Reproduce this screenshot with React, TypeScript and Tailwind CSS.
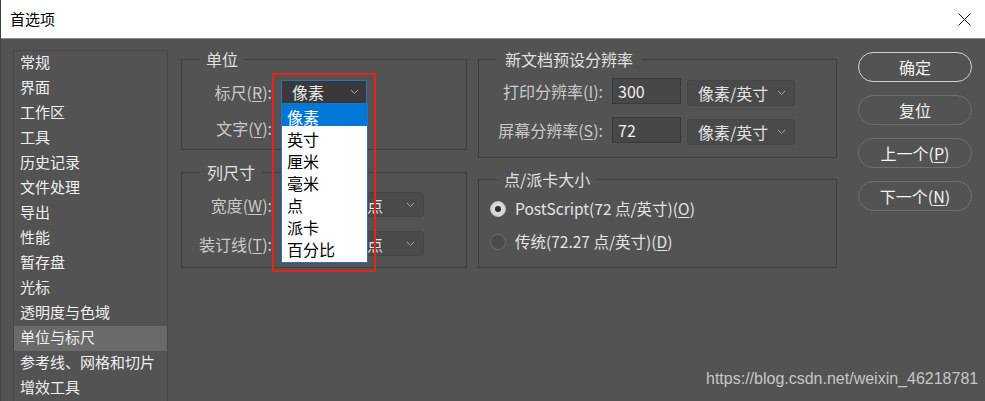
const navItems = [
  "常规",
  "界面",
  "工作区",
  "工具",
  "历史记录",
  "文件处理",
  "导出",
  "性能",
  "暂存盘",
  "光标",
  "透明度与色域",
  "单位与标尺",
  "参考线、网格和切片",
  "增效工具",
];

const unitOptions = ["像素", "英寸", "厘米", "毫米", "点", "派卡", "百分比"];

const Chevron = () => (
  <svg width="9" height="6" viewBox="0 0 9 6" className="shrink-0">
    <polyline points="1,1 4.5,4.5 8,1" fill="none" stroke="#a8a8a8" strokeWidth="1" />
  </svg>
);

const Key = ({ k }: { k: string }) => (
  <>
    (<span className="underline underline-offset-2">{k}</span>)
  </>
);

const Select = ({ value, className }: { value: string; className: string }) => (
  <div
    className={`flex items-center justify-between pl-[10px] pr-[8px] rounded-[3px] border border-[#464646] bg-[#4a4a4a] text-[16px] text-[#e2e2e2] ${className}`}
  >
    <span>{value}</span>
    <Chevron />
  </div>
);

export default function App() {
  return (
    <div className="relative w-[985px] h-[401px] overflow-hidden bg-[#535353] border-l border-[#3a4444] font-['Noto_Sans_CJK_SC',sans-serif]">
      {/* title bar */}
      <div className="h-[39px] bg-white border-b border-[#8c8c8c] flex items-center justify-between pl-[9px] pr-[14px]">
        <span className="text-[15px] text-black">首选项</span>
        <svg width="13" height="13" viewBox="0 0 13 13">
          <line x1="0.5" y1="0.5" x2="12.5" y2="12.5" stroke="#111" strokeWidth="1" />
          <line x1="12.5" y1="0.5" x2="0.5" y2="12.5" stroke="#111" strokeWidth="1" />
        </svg>
      </div>

      <div className="flex pl-[12px]">
        {/* nav list */}
        <div className="mt-[11px] w-[155px] h-[360px] border border-[#474747]">
          {navItems.map((item, i) => (
            <div
              key={item}
              className={`h-[25px] flex items-center pl-[6px] pb-[2px] text-[15px] text-[#f0f0f0] ${
                i === 11 ? "bg-[#6a6a6a]" : ""
              }`}
            >
              {item}
            </div>
          ))}
        </div>

        {/* left column */}
        <div className="ml-[13px] mt-[10px] w-[286px] flex flex-col gap-[12px]">
          <fieldset className="h-[101px] border border-[#3f3f3f]">
            <legend className="ml-[18px] px-[6px] text-[16px] leading-[20px] text-[#e0e0e0]">单位</legend>
            <div className="mt-[11px] flex flex-col gap-[12px]">
              <div className="h-[24px] flex items-center">
                <span className="w-[90px] text-right text-[16px] text-[#cacaca]">
                  标尺<Key k="R" />:
                </span>
                <div className="ml-[9px] w-[86px] h-[24px] flex items-center justify-between pl-[10px] pr-[7px] border border-[#2a6fc4] bg-[#393939] text-[16px] text-[#e8e8e8]">
                  <span>像素</span>
                  <Chevron />
                </div>
              </div>
              <div className="h-[24px] flex items-center">
                <span className="w-[90px] text-right text-[16px] text-[#cacaca]">
                  文字<Key k="Y" />:
                </span>
                {/* covered by the open list */}
                <div className="ml-[9px] w-[86px] h-[24px] rounded-[3px] border border-[#464646] bg-[#4a4a4a]" />
              </div>
            </div>
          </fieldset>

          <fieldset className="h-[106px] border border-[#3f3f3f]">
            <legend className="ml-[18px] px-[7px] text-[16px] leading-[20px] text-[#e0e0e0]">列尺寸</legend>
            <div className="mt-[10px] flex flex-col gap-[14px]">
              {[
                ["宽度", "W"],
                ["装订线", "T"],
              ].map(([label, k]) => (
                <div key={k} className="h-[25px] flex items-center">
                  <span className="w-[90px] text-right text-[16px] text-[#cacaca]">
                    {label}
                    <Key k={k} />:
                  </span>
                  <div className="ml-[9px] w-[70px] h-[25px] border border-[#3b3b3b] bg-[#464646]" />
                  <Select value="点" className="ml-[5px] w-[68px] h-[25px]" />
                </div>
              ))}
            </div>
          </fieldset>
        </div>

        {/* right column */}
        <div className="ml-[11px] mt-[10px] w-[359px] flex flex-col gap-[11px]">
          <fieldset className="h-[109px] border border-[#3f3f3f]">
            <legend className="ml-[17px] px-[9px] text-[16px] leading-[20px] text-[#e0e0e0]">新文档预设分辨率</legend>
            <div className="mt-[9px] flex flex-col gap-[11px]">
              {[
                ["打印分辨率", "I", "300"],
                ["屏幕分辨率", "S", "72"],
              ].map(([label, k, v]) => (
                <div key={k} className="h-[28px] flex">
                  <span className="w-[124px] self-center -mt-[2px] text-right text-[16px] text-[#cacaca]">
                    {label}
                    <Key k={k} />:
                  </span>
                  <div className="ml-[9px] w-[69px] h-[26px] self-start flex items-center pl-[5px] border border-[#393939] bg-[#474747] text-[16px] text-[#ececec]">
                    {v}
                  </div>
                  <Select value="像素/英寸" className="ml-[6px] w-[108px] h-[26px] self-end" />
                </div>
              ))}
            </div>
          </fieldset>

          <fieldset className="h-[99px] border border-[#3f3f3f]">
            <legend className="ml-[18px] px-[7px] text-[16px] leading-[20px] text-[#e0e0e0]">点/派卡大小</legend>
            <div className="mt-[9px] pl-[11px] flex flex-col gap-[11px]">
              <div className="h-[22px] flex items-center gap-[9px] text-[15.5px] text-[#e4e4e4]">
                <span className="w-[16px] h-[16px] rounded-full bg-[#d8d8d8] border border-[#bdbdbd] flex items-center justify-center">
                  <span className="w-[6px] h-[6px] rounded-full bg-[#2e2e2e]" />
                </span>
                <span>
                  PostScript(72 点/英寸)<Key k="O" />
                </span>
              </div>
              <div className="h-[22px] flex items-center gap-[9px] text-[15.5px] text-[#e4e4e4]">
                <span className="w-[16px] h-[16px] rounded-full bg-[#4b4b4b] border border-[#6a6a6a]" />
                <span>
                  传统(72.27 点/英寸)<Key k="D" />
                </span>
              </div>
            </div>
          </fieldset>
        </div>

        {/* buttons */}
        <div className="ml-[21px] mt-[13px] w-[114px] flex flex-col gap-[13px] text-[16px] text-[#f2f2f2]">
          <button className="h-[30px] rounded-full border-[1.5px] border-[#d2d2d2]">确定</button>
          <button className="h-[30px] rounded-full border border-[#6e6e6e]">复位</button>
          <button className="h-[30px] rounded-full border border-[#6e6e6e]">
            上一个<Key k="P" />
          </button>
          <button className="h-[30px] rounded-full border border-[#6e6e6e]">
            下一个<Key k="N" />
          </button>
        </div>
      </div>

      {/* open unit dropdown */}
      <div className="absolute left-[280px] top-[103px] w-[87px] h-[160px] border border-[#2a6fc4] bg-white">
        {unitOptions.map((opt, i) => (
          <div
            key={opt}
            className={`h-[22px] pl-[5px] pt-[3px] text-[16px] leading-[20px] ${
              i === 0 ? "bg-[#0078d7] text-white" : "text-black"
            }`}
          >
            {opt}
          </div>
        ))}
      </div>

      {/* red annotation box */}
      <div className="absolute left-[271px] top-[73px] w-[104px] h-[199px] border-2 border-[#e5231d]" />

      {/* watermark */}
      <div className="absolute left-[705px] top-[370px] text-[16px] leading-[18px] text-[#c6c6c6] font-['Liberation_Sans',sans-serif]">
        https://blog.csdn.net/weixin_46218781
      </div>
    </div>
  );
}
